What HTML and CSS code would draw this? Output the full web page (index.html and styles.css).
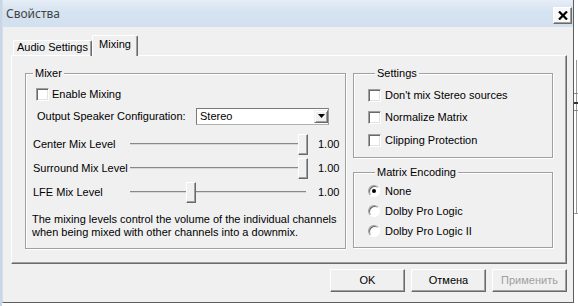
FILE: index.html
```html
<!DOCTYPE html>
<html>
<head>
  <meta charset="utf-8">
  <title>Свойства</title>
  <link rel="stylesheet" href="styles.css">
</head>
<body>
  <div class="desk">
    <div class="window">
      <div class="titlebar">
        <span class="title">Свойства</span>
        <button class="close" title="Закрыть">
          <svg width="10" height="9" viewBox="0 0 10 9"><path d="M1 0.5 L9 8.5 M9 0.5 L1 8.5" stroke="#000" stroke-width="2.2"/></svg>
        </button>
      </div>

      <div class="client">
        <div class="tabs">
          <div class="tab">Audio Settings</div>
          <div class="tab active">Mixing</div>
        </div>

        <div class="panel">
          <fieldset class="group mixer">
            <legend>Mixer</legend>
            <label class="check-row enable"><span class="checkbox"></span>Enable Mixing</label>
            <div class="config-row">
              <span class="config-label">Output Speaker Configuration:</span>
              <div class="combo">
                <span class="combo-value">Stereo</span>
                <span class="combo-btn">
                  <svg width="7" height="4" viewBox="0 0 7 4"><path d="M0 0 H7 L3.5 4 Z" fill="#000"/></svg>
                </span>
              </div>
            </div>
            <div class="slider-row first">
              <span class="slider-label">Center Mix Level</span>
              <div class="slider"><div class="track"></div><div class="thumb" style="left:168px"></div></div>
              <span class="slider-value">1.00</span>
            </div>
            <div class="slider-row">
              <span class="slider-label">Surround Mix Level</span>
              <div class="slider"><div class="track"></div><div class="thumb" style="left:168px"></div></div>
              <span class="slider-value">1.00</span>
            </div>
            <div class="slider-row">
              <span class="slider-label">LFE Mix Level</span>
              <div class="slider"><div class="track"></div><div class="thumb" style="left:56px"></div></div>
              <span class="slider-value">1.00</span>
            </div>
            <p class="note">The mixing levels control the volume of the individual channels<br>when being mixed with other channels into a downmix.</p>
          </fieldset>

          <div class="side">
            <fieldset class="group settings">
              <legend>Settings</legend>
              <label class="check-row"><span class="checkbox"></span>Don't mix Stereo sources</label>
              <label class="check-row"><span class="checkbox"></span>Normalize Matrix</label>
              <label class="check-row"><span class="checkbox"></span>Clipping Protection</label>
            </fieldset>
            <fieldset class="group matrix">
              <legend>Matrix Encoding</legend>
              <label class="radio-row"><span class="radio checked"></span>None</label>
              <label class="radio-row"><span class="radio"></span>Dolby Pro Logic</label>
              <label class="radio-row"><span class="radio"></span>Dolby Pro Logic II</label>
            </fieldset>
          </div>
        </div>

        <div class="buttons">
          <button class="btn">OK</button>
          <button class="btn">Отмена</button>
          <button class="btn" disabled>Применить</button>
        </div>
      </div>
    </div>
    <div class="behind"></div>
  </div>
</body>
</html>
```

FILE: styles.css
```css
* {
  margin: 0;
  padding: 0;
  box-sizing: border-box;
}

body {
  width: 578px;
  height: 306px;
  overflow: hidden;
  background: #fff;
  font: 11px/13px "Liberation Sans", Arial, sans-serif;
  color: #000;
}

button {
  font: inherit;
  color: inherit;
}

.desk {
  display: flex;
  height: 306px;
  background: linear-gradient(to right, #c8d6e6 0, #c8d6e6 2px, #fff 2px);
}

.window {
  width: 572px;
  height: 303px;
  margin-left: 2px;
  display: flex;
  flex-direction: column;
  background: #f0f0f0;
  border-left: 1px solid #d4dde8;
  border-right: 1px solid #5f5f5f;
  border-bottom: 1px solid #5f5f5f;
}

/* title bar */
.titlebar {
  height: 27px;
  flex-shrink: 0;
  display: flex;
  justify-content: space-between;
  padding-left: 3px;
  background: linear-gradient(#e6eef7, #d6e3f1 40%, #d2e0ef);
}

.title {
  font: 12px/27px "Noto Sans", "Open Sans", sans-serif;
  color: #444;
}

.close {
  width: 19px;
  height: 17px;
  margin: 7px 1px 0 0;
  display: flex;
  align-items: center;
  justify-content: center;
  background: #f8f8f8;
  border: 1px solid;
  border-color: #fff #6a6a6a #6a6a6a #fff;
  box-shadow: inset -1px -1px 0 #a0a0a0;
}

/* client area */
.client {
  flex: 1;
  padding: 8px 6px 0 8px;
}

.tabs {
  display: flex;
  align-items: flex-end;
  height: 21px;
  margin-left: 2px;
  margin-bottom: -1px;
  position: relative;
  z-index: 1;
}

.tab {
  width: 79px;
  height: 16px;
  text-align: center;
  border-top: 1px solid #fff;
  border-left: 1px solid #fff;
  border-right: 1px solid #696969;
  border-radius: 2px 2px 0 0;
  box-shadow: inset -1px 0 0 #a0a0a0;
}

.tab.active {
  width: 46px;
  height: 21px;
  padding-top: 2px;
  background: #f0f0f0;
}

.panel {
  width: 556px;
  height: 209px;
  display: flex;
  gap: 7px;
  padding: 11px 0 0 13px;
  border: 1px solid;
  border-color: #fff #696969 #696969 #fff;
  box-shadow: inset -1px -1px 0 #a0a0a0;
}

/* group boxes */
.group {
  min-width: 0;
  border: 1px solid #a0a0a0;
  box-shadow: inset 1px 1px 0 #fff, 1px 1px 0 #fff;
}

.group legend {
  margin-left: 7px;
  padding: 0 2px;
  line-height: 13px;
  background: #f0f0f0;
}

.mixer {
  width: 321px;
  height: 182px;
}

.side {
  width: 200px;
  display: flex;
  flex-direction: column;
  gap: 8px;
}

.settings {
  height: 91px;
  padding: 4px 0 0 14px;
}

.matrix {
  height: 82px;
  padding: 2px 0 0 14px;
}

/* checkboxes and radios */
.check-row {
  display: flex;
  align-items: center;
  height: 22.5px;
}

.enable {
  height: 20px;
  margin-top: 4px;
  padding-left: 10px;
}

.checkbox {
  width: 13px;
  height: 13px;
  margin-right: 4px;
  background: #fff;
  border: 1px solid;
  border-color: #a0a0a0 #fff #fff #a0a0a0;
  box-shadow: inset 1px 1px 0 #696969, inset -1px -1px 0 #e3e3e3;
}

.enable .checkbox {
  margin-right: 3px;
}

.radio-row {
  display: flex;
  align-items: center;
  height: 20px;
}

.radio {
  width: 12px;
  height: 12px;
  margin-right: 5px;
  border-radius: 50%;
  border: 1px solid;
  border-color: #a0a0a0 #fff #fff #a0a0a0;
  background: #fff;
  box-shadow: inset 1px 1px 0 #696969;
  display: flex;
  align-items: center;
  justify-content: center;
}

.radio.checked::after {
  content: "";
  width: 4px;
  height: 4px;
  border-radius: 50%;
  background: #000;
}

/* speaker configuration */
.config-row {
  display: flex;
  align-items: center;
  height: 24px;
  padding-left: 11px;
}

.config-label {
  width: 159px;
}

.combo {
  width: 133px;
  height: 17px;
  display: flex;
  background: #fff;
  border: 1px solid #7a7a7a;
  border-right-color: #9a9a9a;
  border-bottom-color: #b0b0b0;
}

.combo-value {
  flex: 1;
  padding-left: 3px;
  line-height: 15px;
}

.combo-btn {
  width: 14px;
  height: 13px;
  margin: 1px 0 0 0;
  display: flex;
  align-items: center;
  justify-content: center;
  background: #f0f0f0;
  border: 1px solid;
  border-color: #f0f0f0 #696969 #696969 #f0f0f0;
  box-shadow: inset 1px 1px 0 #fff, inset -1px -1px 0 #a0a0a0;
}

/* sliders */
.slider-row {
  display: flex;
  align-items: center;
  height: 24px;
  padding-left: 7px;
}

.slider-row.first {
  margin-top: 4px;
}

.slider-label {
  width: 97px;
}

.slider {
  width: 178px;
  height: 24px;
  position: relative;
  display: flex;
  align-items: center;
}

.track {
  width: 176px;
  height: 2px;
  border-top: 1px solid #888;
  border-bottom: 1px solid #d8d8d8;
}

.thumb {
  position: absolute;
  top: 2px;
  width: 10px;
  height: 21px;
  background: #f0f0f0;
  border: 1px solid;
  border-color: #fff #696969 #696969 #fff;
  box-shadow: inset -1px -1px 0 #a0a0a0;
}

.slider-value {
  margin-left: 10px;
}

.note {
  margin-top: 9px;
  padding-left: 6px;
  line-height: 13px;
}

/* dialog buttons */
.buttons {
  display: flex;
  justify-content: flex-end;
  gap: 6px;
  margin-top: 5px;
}

.btn {
  width: 75px;
  height: 23px;
  background: #f0f0f0;
  border: 1px solid;
  border-color: #fff #696969 #696969 #fff;
  box-shadow: inset -1px -1px 0 #a0a0a0;
}

.btn:disabled {
  color: #a0a0a0;
}

/* window behind the dialog */
.behind {
  width: 4px;
  height: 306px;
  background:
    linear-gradient(#333, #333) 0 102px / 4px 2px no-repeat,
    linear-gradient(#888, #888) 0 93px / 4px 1px no-repeat,
    linear-gradient(#888, #888) 0 110px / 4px 1px no-repeat,
    linear-gradient(#999, #999) 0 213px / 4px 1px no-repeat,
    linear-gradient(#999, #999) 2px 60px / 1px 153px no-repeat,
    #fff;
}
```
